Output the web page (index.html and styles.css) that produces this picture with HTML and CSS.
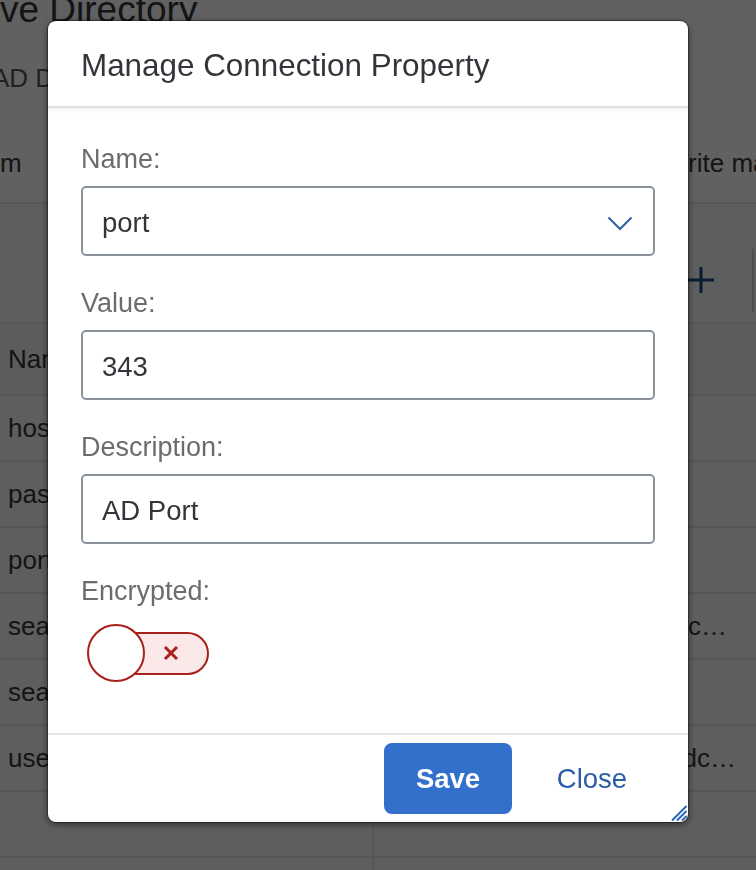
FILE: index.html
```html
<!DOCTYPE html>
<html lang="en">
<head>
<meta charset="utf-8">
<title>Manage Connection Property</title>
<link rel="stylesheet" href="styles.css">
</head>
<body>
<div class="page">
  <div class="bg-title">ve Directory</div>
  <div class="bg-sub">AD Domain Settings</div>
  <div class="bg-tabs"><span class="bg-tab">m</span><span class="bg-tab">Write mapping</span></div>
  <div class="bg-toolbar">
    <svg class="bg-plus" viewBox="0 0 26 28" width="26" height="28"><path d="M13 1v26M0 14h26" stroke="currentColor" stroke-width="3" fill="none"/></svg>
    <span class="bg-sep"></span>
  </div>
  <div class="bg-table">
    <div class="bg-row bg-row-head"><div class="bg-cell">Name</div><div class="bg-cell bg-val bg-val-head">Value</div></div>
    <div class="bg-row"><div class="bg-cell">host</div><div class="bg-cell bg-val"></div></div>
    <div class="bg-row"><div class="bg-cell">password</div><div class="bg-cell bg-val"></div></div>
    <div class="bg-row"><div class="bg-cell">port</div><div class="bg-cell bg-val"></div></div>
    <div class="bg-row"><div class="bg-cell">search base</div><div class="bg-cell bg-val">dc=corp,dc=local,c…</div></div>
    <div class="bg-row"><div class="bg-cell">search filter</div><div class="bg-cell bg-val"></div></div>
    <div class="bg-row"><div class="bg-cell">user</div><div class="bg-cell bg-val bg-val-wide">cn=admin,dc=corp,dc…</div></div>
    <div class="bg-row"><div class="bg-cell"></div><div class="bg-cell bg-val"></div></div>
    <div class="bg-row"><div class="bg-cell"></div><div class="bg-cell bg-val"></div></div>
  </div>
</div>
<div class="overlay"></div>
<div class="dialog" role="dialog" aria-labelledby="dlg-title">
  <div class="dlg-header"><h1 id="dlg-title" class="dlg-title">Manage Connection Property</h1></div>
  <div class="dlg-body">
    <div class="field">
      <div class="field-label">Name:</div>
      <div class="input"><span>port</span>
        <svg class="chevron" viewBox="0 0 26 15" width="26" height="15"><path d="M1.5 1.5L13 13L24.5 1.5" stroke="currentColor" stroke-width="2" fill="none"/></svg>
      </div>
    </div>
    <div class="field">
      <div class="field-label">Value:</div>
      <div class="input"><span>343</span></div>
    </div>
    <div class="field">
      <div class="field-label">Description:</div>
      <div class="input"><span>AD Port</span></div>
    </div>
    <div class="field">
      <div class="field-label">Encrypted:</div>
      <div class="switch">
        <span class="knob"></span>
        <span class="track"><svg class="xmark" viewBox="0 0 16 16" width="16" height="16"><path d="M2 2L14 14M14 2L2 14" stroke="currentColor" stroke-width="3" fill="none"/></svg></span>
      </div>
    </div>
  </div>
  <div class="dlg-footer">
    <button class="btn btn-primary" type="button">Save</button>
    <button class="btn btn-ghost" type="button">Close</button>
  </div>
  <svg class="resize" viewBox="0 0 20 20" width="20" height="20"><path d="M4 18.5L18.5 4M9 18.5L18.5 9M14 18.5L18.5 14" stroke="#2b63b8" stroke-width="2" fill="none"/></svg>
</div>
</body>
</html>
```
FILE: styles.css
```css
html, body {
  margin: 0;
  padding: 0;
}
body {
  width: 756px;
  height: 870px;
  overflow: hidden;
  font-family: "Liberation Sans", Arial, sans-serif;
  background: #ffffff;
}
.page {
  width: 756px;
  height: 870px;
  overflow: hidden;
  color: #32363a;
  background: #ffffff;
}
.bg-title {
  font-size: 37px;
  line-height: 20px;
  height: 20px;
  white-space: nowrap;
}
.bg-sub {
  margin-top: 42px;
  margin-left: -8px;
  font-size: 26px;
  line-height: 32px;
  color: #55585b;
  white-space: nowrap;
}
.bg-tabs {
  margin-top: 53px;
  display: grid;
  grid-template-columns: 664px 1fr;
  font-size: 26px;
  line-height: 32px;
  padding-bottom: 23px;
  border-bottom: 2px solid #e5e5e5;
  white-space: nowrap;
  overflow: hidden;
}
.bg-toolbar {
  height: 118px;
  box-sizing: border-box;
  padding-top: 34px;
  display: flex;
  justify-content: flex-end;
  align-items: center;
  gap: 38px;
  padding-right: 2px;
  background: #f7f7f7;
  border-bottom: 2px solid #e5e5e5;
  height: 120px;
}
.bg-plus {
  color: #1d4a85;
}
.bg-sep {
  width: 2px;
  height: 63px;
  background: #d0d0d0;
}
.bg-table {
  background: #f7f7f7;
}
.bg-row {
  display: grid;
  grid-template-columns: 372px 1fr;
  height: 64px;
  border-bottom: 2px solid #e2e2e2;
  font-size: 26px;
  align-items: center;
}
.bg-row-head {
  height: 70px;
  background: #f2f2f2;
}
.bg-cell {
  padding-left: 8px;
  white-space: nowrap;
  overflow: hidden;
  height: 100%;
  display: flex;
  align-items: center;
}
.bg-val {
  border-left: 2px solid #e2e2e2;
  justify-content: flex-end;
  padding-right: 29px;
}
.bg-val-wide {
  padding-right: 20px;
}
.bg-val-head {
  justify-content: flex-start;
}
.overlay {
  position: fixed;
  inset: 0;
  background: rgba(0, 0, 0, 0.62);
}
.dialog {
  position: fixed;
  left: 48px;
  top: 21px;
  width: 640px;
  height: 801px;
  box-sizing: border-box;
  background: #ffffff;
  border-radius: 8px;
  display: flex;
  flex-direction: column;
  box-shadow: 0 0 0 1px rgba(0, 0, 0, 0.35), 0 2px 6px 1px rgba(0, 0, 0, 0.45);
  overflow: hidden;
}
.dlg-header {
  height: 85px;
  box-sizing: border-box;
  padding-top: 5px;
  flex: none;
  display: flex;
  align-items: center;
  padding-left: 33px;
  border-bottom: 2px solid #e1e1e1;
  box-shadow: 0 2px 5px rgba(0, 0, 0, 0.06);
  position: relative;
  z-index: 1;
  height: 87px;
}
.dlg-title {
  margin: 0;
  font-size: 31.4px;
  font-weight: normal;
  color: #32363a;
  white-space: nowrap;
}
.dlg-body {
  flex: 1;
  padding: 35px 33px 0;
}
.field {
  margin-bottom: 31px;
}
.field-label {
  font-size: 27px;
  line-height: 32px;
  color: #6a6d70;
  margin-bottom: 11px;
}
.input {
  height: 70px;
  box-sizing: border-box;
  border: 2px solid #89919a;
  border-radius: 5px;
  padding: 3px 20px 0 19px;
  display: flex;
  align-items: center;
  justify-content: space-between;
  font-size: 27.5px;
  color: #32363a;
}
.chevron {
  color: #2b5fa8;
  margin-top: 1px;
}
.switch {
  display: flex;
  align-items: center;
  margin-top: 17px;
  margin-left: 6px;
}
.knob {
  width: 58px;
  height: 58px;
  box-sizing: border-box;
  border: 2px solid #a8201a;
  border-radius: 50%;
  background: #ffffff;
  position: relative;
  z-index: 1;
  flex: none;
}
.track {
  width: 99px;
  height: 43px;
  box-sizing: border-box;
  margin-left: -35px;
  padding-left: 23px;
  border: 2px solid #a8201a;
  border-radius: 22px;
  background: #fbe9e9;
  display: flex;
  align-items: center;
  justify-content: center;
  color: #aa1f1a;
}
.dlg-footer {
  flex: none;
  height: 89px;
  box-sizing: border-box;
  border-top: 2px solid #e5e5e5;
  padding: 8px 32px 8px;
  display: flex;
  justify-content: flex-end;
  gap: 16px;
}
.btn {
  width: 128px;
  height: 71px;
  border-radius: 8px;
  border: none;
  font-family: "Liberation Sans", Arial, sans-serif;
  font-size: 27.5px;
  cursor: pointer;
  padding: 0;
}
.btn-primary {
  background: #3370cc;
  color: #ffffff;
  font-weight: bold;
}
.btn-ghost {
  background: transparent;
  color: #2b5ca8;
}
.resize {
  position: absolute;
  right: 0;
  bottom: 0;
}
```
